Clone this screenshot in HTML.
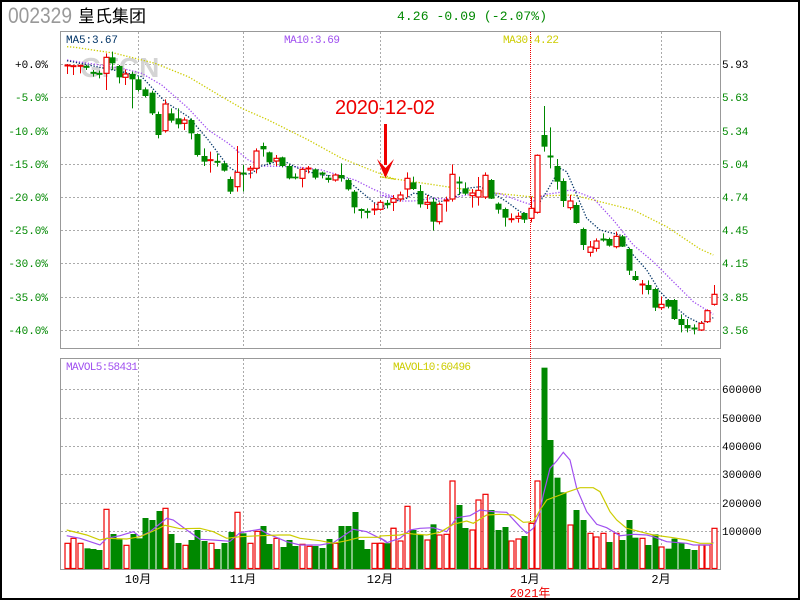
<!DOCTYPE html>
<html><head><meta charset="utf-8"><style>
html,body{margin:0;padding:0;background:#fff;width:800px;height:600px;overflow:hidden}
svg{display:block}
text{font-family:"Liberation Mono","Noto Sans CJK SC",monospace}
</style></head><body>
<svg id="s" width="800" height="600" xmlns="http://www.w3.org/2000/svg">
<rect x="1" y="1" width="798" height="598" fill="#fff" stroke="#000" stroke-width="2"/>
<text x="8" y="23" font-size="22" fill="#999" textLength="64" lengthAdjust="spacingAndGlyphs" style="font-family:'Liberation Sans',sans-serif">002329</text>
<text x="78" y="22" font-size="17" fill="#000" style="font-family:'Noto Sans CJK SC',sans-serif">皇氏集团</text>
<text x="397" y="20" font-size="13" fill="#080" textLength="150">4.26 -0.09 (-2.07%)</text>
<g id="grid" stroke="#aaa" stroke-dasharray="2,2" stroke-width="1"></g>
<rect x="60.5" y="31.5" width="660" height="317" fill="none" stroke="#999"/>
<rect x="60.5" y="358.5" width="660" height="211" fill="none" stroke="#999"/>
<line x1="530.5" y1="32" x2="530.5" y2="569" stroke="#e00" stroke-dasharray="1,1"/>
<text x="80" y="77" font-size="28" font-weight="bold" fill="#d4d4d4" style="font-family:'Liberation Sans',sans-serif">GFCN</text>
<g id="lines"></g>
<g id="cand"></g>
<g id="vol"></g>
<g id="vlines"></g>
<text x="66" y="43" font-size="11" fill="#036" textLength="52">MA5:3.67</text>
<text x="284" y="43" font-size="11" fill="#a050f0" textLength="56">MA10:3.69</text>
<text x="503" y="43" font-size="11" fill="#cc0" textLength="56">MA30:4.22</text>
<text x="66" y="370" font-size="11" fill="#a050f0" textLength="72">MAVOL5:58431</text>
<text x="393" y="370" font-size="11" fill="#cc0" textLength="78">MAVOL10:60496</text>
<text x="335" y="114" font-size="20" fill="#e00" textLength="100" style="font-family:'Liberation Sans',sans-serif">2020-12-02</text>
<line x1="385.5" y1="124" x2="385.5" y2="165" stroke="#e00" stroke-width="3"/>
<polygon points="377,159 385.5,178 394,159 385.5,168" fill="#e00"/>
<g id="lab" font-size="11"></g>
<g font-size="12" fill="#000" style="font-family:'Noto Sans CJK SC',sans-serif" text-anchor="middle">
<text x="138" y="583">10月</text><text x="243" y="583">11月</text><text x="380" y="583">12月</text><text x="530" y="583">1月</text><text x="661" y="583">2月</text>
<text x="530" y="597" fill="#e00">2021年</text></g>
</svg>
<script>
var NS="http://www.w3.org/2000/svg";
function el(p,t,a){var e=document.createElementNS(NS,t);for(var k in a)e.setAttribute(k,a[k]);document.getElementById(p).appendChild(e);return e;}
[138,243,380,661].forEach(function(x){el("grid","line",{x1:x+.5,y1:32,x2:x+.5,y2:348});el("grid","line",{x1:x+.5,y1:359,x2:x+.5,y2:569});});
[64,97,131,164,197,230,263,297,330].forEach(function(y){el("grid","line",{x1:61,y1:y+.5,x2:720,y2:y+.5});});
[389,418,446,474,503,531].forEach(function(y){el("grid","line",{x1:61,y1:y+.5,x2:720,y2:y+.5});});
var pl=["+0.0%","-5.0%","-10.0%","-15.0%","-20.0%","-25.0%","-30.0%","-35.0%","-40.0%"];
var pr=["5.93","5.63","5.34","5.04","4.74","4.45","4.15","3.85","3.56"];
[64,97,131,164,197,230,263,297,330].forEach(function(y,i){
 var t=el("lab","text",{x:48,y:y+4,"text-anchor":"end",fill:i==0?"#000":"#080"});t.textContent=pl[i];
 var t2=el("lab","text",{x:722,y:y+4,fill:i==0?"#000":"#080"});t2.textContent=pr[i];});
["600000","500000","400000","300000","200000","100000"].forEach(function(s,i){var y=[389,418,446,474,503,531][i];var t=el("lab","text",{x:722,y:y+4,fill:"#000"});t.textContent=s;});
var A=[[36,75,79,'r',72,102],[55,77,80,'r',75,105],[74,76,79,'r',74,100],[94,79,82,'g',75,90],[113,97,101,'g',90,110],[132,100,103,'g',92,115],[152,52,100,'r',40,150],[171,52,70,'g',35,90],[191,78,112,'g',75,130],[210,102,112,'r',88,135],[230,102,118,'g',95,205],[250,118,150,'g',110,155],[270,148,168,'g',142,172],[290,158,220,'g',152,225],[310,222,285,'g',215,295],[329,192,272,'r',178,278],[349,220,242,'g',205,248],[368,235,253,'g',205,265],[388,240,250,'r',232,270],[407,240,280,'g',235,298],[427,282,345,'g',280,350],[446,348,365,'g',325,378],[466,359,362,'r',335,398],[486,364,367,'g',340,380],[506,370,392,'g',365,395],[526,417,455,'g',410,462],[545,397,440,'r',318,455],[565,399,402,'g',375,455],[584,385,390,'r',378,415],[604,333,385,'r',325,400],[624,318,328,'g',308,350],[643,337,367,'g',335,372],[663,355,363,'r',345,378],[682,352,378,'g',350,382],[702,378,415,'g',372,418],[721,410,415,'g',400,418],[741,388,415,'r',382,442],[760,384,387,'r',378,400],[780,388,413,'g',385,418],[800,399,402,'g',395,415],[819,413,420,'g',405,428],[839,405,420,'r',400,425],[858,405,415,'g',370,425],[878,420,448,'g',415,452],[898,455,502,'g',450,520],[917,507,513,'g',505,535],[937,514,517,'g',505,535],[956,507,510,'r',490,525],[976,487,508,'r',480,512],[995,491,494,'g',480,505],[1015,477,485,'r',465,510]];
var B=[[20,325,328,'g',315,340],[40,311,322,'r',300,348],[60,300,312,'r',290,320],[80,250,282,'r',232,308],[100,262,282,'g',245,285],[120,288,328,'g',270,338],[140,322,328,'r',300,342],[160,320,380,'g',310,407],[178,328,380,'r',322,388],[198,315,318,'r',305,350],[217,238,312,'r',208,320],[236,261,264,'g',245,300],[256,280,296,'g',262,300],[275,294,302,'r',282,338],[295,286,306,'r',246,332],[314,241,306,'r',232,312],[334,255,311,'g',252,312],[354,326,344,'g',322,356],[374,342,368,'g',338,395],[393,371,374,'r',355,383],[413,364,370,'r',352,383],[433,354,374,'g',352,384],[453,340,370,'r',305,382],[472,181,352,'r',178,356],[492,120,155,'g',33,170],[511,183,186,'g',97,220],[531,213,260,'g',192,284],[550,258,318,'g',250,336],[570,318,338,'r',300,345],[589,330,384,'g',322,386],[609,402,450,'g',398,465],[629,456,472,'r',438,485],[649,438,460,'r',430,470],[668,432,435,'g',415,440],[688,432,452,'g',428,455],[707,424,455,'r',410,460],[727,424,455,'g',420,456],[746,462,527,'g',458,540],[766,543,555,'g',528,558],[785,567,570,'r',555,598],[805,570,585,'g',556,598],[825,582,638,'g',578,648],[844,628,638,'r',605,645],[864,615,635,'g',612,640],[883,615,672,'g',612,675],[903,672,690,'g',658,712],[922,690,700,'g',672,712],[942,699,702,'g',688,718],[962,685,705,'r',678,708],[982,647,680,'r',643,684],[1001,598,628,'r',570,632]];
function cand(x,t,b,c,wt,wb){
 var col=c=='r'?'#e00':'#080';
 el("cand","line",{x1:x,y1:wt,x2:x,y2:wb,stroke:col});
 if(b-t<1.5){el("cand","line",{x1:x-3,y1:t+.5,x2:x+3,y2:t+.5,stroke:col,"stroke-width":2});return;}
 if(c=='r')el("cand","rect",{x:x-2.5,y:t,width:5,height:b-t,fill:"#fff",stroke:col,"stroke-width":1.2});
 else el("cand","rect",{x:x-3,y:t,width:6,height:b-t,fill:col});
}
function rx(v){return Math.round(v)+.5;}
A.forEach(function(d){cand(rx(55+d[0]/3),40+d[1]/3,40+d[2]/3,d[3],40+d[4]/3,40+d[5]/3);});
B.forEach(function(d){cand(rx(380+d[0]/3),95+d[1]/3,95+d[2]/3,d[3],95+d[4]/3,95+d[5]/3);});
function pts(arr,ox,oy){return arr.map(function(p){return (ox+p[0]/3).toFixed(1)+","+(oy+p[1]/3).toFixed(1);}).join(" ");}
function ma(a4,a5,col){el("lines","polyline",{points:pts(a4,55,40)+" "+pts(a5,380,95),fill:"none",stroke:col,"stroke-width":1.3,"stroke-dasharray":"1.3,1.7"});}
ma([[36,20],[60,22],[180,40],[300,70],[400,110],[500,170],[560,205],[640,240],[760,300],[860,355],[960,395],[1020,418]],[[0,245],[100,260],[200,275],[300,290],[400,300],[450,305],[500,302],[580,300],[660,320],[760,345],[860,395],[960,462],[1000,480]],"#cc0");
ma([[36,60],[100,70],[200,85],[260,100],[320,135],[400,205],[460,270],[520,310],[580,360],[620,378],[720,380],[800,390],[900,420],[960,450],[1015,470]],[[0,300],[60,318],[100,318],[160,310],[200,312],[260,300],[320,292],[360,296],[420,318],[450,328],[470,310],[500,298],[540,292],[570,285],[590,290],[640,310],[700,375],[760,450],[820,500],[880,560],[940,620],[1000,658]],"#a050f0");
ma([[36,62],[100,75],[200,95],[260,110],[330,185],[400,230],[460,300],[520,380],[560,405],[590,400],[620,378],[680,360],[740,390],[800,405],[860,410],[900,440],[960,490],[990,505]],[[0,338],[40,320],[80,310],[100,295],[140,298],[180,320],[220,310],[260,280],[300,275],[340,295],[380,320],[420,350],[450,360],[480,320],[500,290],[540,220],[560,230],[580,275],[620,370],[660,405],[720,420],[760,480],[800,525],[840,590],[880,630],[920,665],[960,685],[1000,668]],"#036");
var V1="200:640r,220:625r,240:640r,260:655g,278:657g,298:660g,318:538r,338:612g,358:628g,378:646r,398:612g,416:625g,436:564g,456:570g,476:543g,494:535r,514:612g,534:639g,554:646r,574:630g,592:600g,612:633g,632:640r,652:657g,672:639g,692:606g,710:547r,730:610g,750:640r,770:604r,788:588g,808:642g,828:625r,848:651g,866:630g,886:648g,906:643r,926:649r,946:648g,966:654g,986:627g,1004:640r,1024:588g,1044:588g,1064:546g,1082:630g,1102:657g,1122:640r,1142:640r,1160:640g,1180:595r";
var V2="0:565r,20:565g,40:520r,60:558r,80:454r,100:525g,120:540g,140:555r,160:508g,178:540r,198:538r,217:378r,236:450g,256:519g,275:525r,295:435r,314:418r,334:465g,354:525g,374:516g,393:558r,413:552r,433:543g,453:505r,472:378r,492:38g,511:255g,531:368g,550:412g,570:510r,589:465g,609:495g,629:535r,649:546r,668:535r,688:561g,707:535r,727:555g,746:495g,766:548g,785:550r,805:570g,825:538g,844:576r,864:581g,883:551g,903:563g,922:582g,942:585g,962:570r,982:570r,1001:520r";
function vbar(x,t,c){var b=569;if(c=='r')el("vol","rect",{x:x-2.5,y:t,width:5,height:b-t-.5,fill:"#fff",stroke:"#e00","stroke-width":1.2});else el("vol","rect",{x:x-3,y:t,width:6,height:b-t,fill:"#080"});}
V1.split(",").forEach(function(s){var p=s.split(":");var c=p[1].slice(-1);vbar(rx(p[0]/3),330+parseInt(p[1])/3,c);});
V2.split(",").forEach(function(s){var p=s.split(":");var c=p[1].slice(-1);vbar(rx(380+p[0]/3),355+parseInt(p[1])/3,c);});
function vl(a,b,col){var s=a.map(function(p){return (p[0]/3).toFixed(1)+","+(330+p[1]/3).toFixed(1);}).join(" ")+" "+b.map(function(p){return (380+p[0]/3).toFixed(1)+","+(355+p[1]/3).toFixed(1);}).join(" ");el("vlines","polyline",{points:s,fill:"none",stroke:col,"stroke-width":1.2});}
vl([[200,617],[240,625],[300,645],[320,625],[360,617],[400,605],[420,620],[450,605],[500,565],[520,570],[560,600],[600,628],[640,630],[690,634],[720,608],[780,598],[800,610],[860,635],[900,645],[960,645],[1000,638],[1060,598],[1100,605],[1160,635]],[[0,548],[20,563],[60,550],[90,525],[120,520],[160,518],[200,530],[230,488],[270,482],[300,465],[340,470],[380,472],[420,515],[440,535],[460,520],[480,470],[490,420],[510,340],[530,318],[550,292],[570,315],[590,400],[620,470],[650,508],[680,518],[720,542],[760,538],[800,540],[820,545],[860,560],[920,565],[940,570],[990,570],[1000,562]],"#a050f0");
vl([[200,600],[260,615],[300,630],[320,625],[380,627],[420,620],[460,603],[495,586],[540,596],[600,595],[640,605],[680,625],[720,620],[780,617],[840,615],[870,615],[900,625],[960,632],[1000,640],[1040,632],[1080,622],[1140,622]],[[0,543],[60,540],[80,535],[100,537],[140,540],[180,532],[220,508],[260,498],[280,505],[320,480],[360,478],[400,480],[430,502],[460,500],[480,465],[500,435],[540,420],[560,412],[600,398],[640,398],[660,410],[690,470],[710,495],[740,520],[780,530],[820,540],[880,548],[920,555],[960,565],[1000,565]],"#cc0");
</script>
</body></html>
